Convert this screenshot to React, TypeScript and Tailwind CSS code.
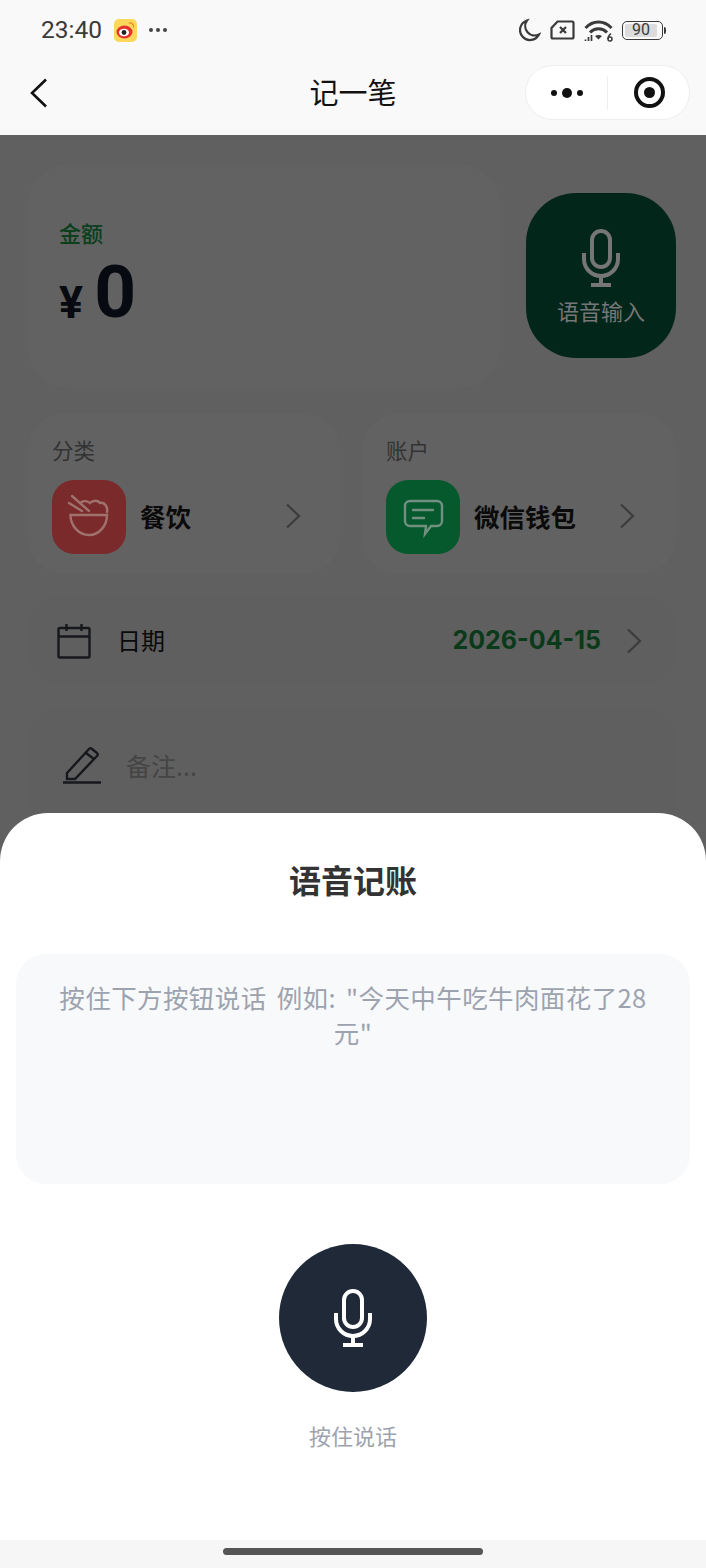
const Chevron = ({ className }: { className?: string }) => (
  <svg className={className} width="16" height="26" viewBox="0 0 16 26" fill="none" stroke="currentColor" strokeWidth="2.2">
    <path d="M2 1.500 14 13 2 24.500" />
  </svg>
);

const MicIcon = ({ className }: { className?: string }) => (
  <svg className={className} width="38" height="58" viewBox="0 0 38 58" fill="none" stroke="currentColor" strokeWidth="4">
    <rect x="10" y="2" width="18" height="36" rx="9" />
    <path d="M2 24v6a17 17 0 0 0 34 0v-6" />
    <path d="M19 47v9M9 56h20" />
  </svg>
);

const StatusBar = () => (
  <div className="flex h-[58px] items-center justify-between pl-[41px] pr-[40px] pt-[2px]">
    <div className="flex items-center">
      <span className="font-['Roboto',sans-serif] text-[24.500px] leading-none text-[#3a3a3a]">23:40</span>
      <svg className="ml-[12px]" width="23" height="23" viewBox="0 0 23 23">
        <rect width="23" height="23" rx="5" fill="#fbd75c" />
        <ellipse cx="10.500" cy="13" rx="8" ry="6.500" fill="#e6322d" />
        <ellipse cx="10" cy="13.500" rx="5" ry="3.800" fill="#fff" />
        <circle cx="10" cy="13.500" r="2.400" fill="#222" />
        <path d="M15 4c3-.5 5 1.500 4.500 4.500" fill="none" stroke="#f08a24" strokeWidth="1.300" />
      </svg>
      <div className="ml-[12px] flex gap-[3px]">
        <span className="h-[4px] w-[4px] rounded-full bg-[#444]" />
        <span className="h-[4px] w-[4px] rounded-full bg-[#444]" />
        <span className="h-[4px] w-[4px] rounded-full bg-[#444]" />
      </div>
    </div>
    <div className="flex items-center text-[#3a3a3a]">
      <svg width="22" height="24" viewBox="0 0 22 24" fill="none" stroke="currentColor" strokeWidth="2.200">
        <path d="M8 2.500a10 10 0 1 0 12 14 9.500 9.500 0 0 1-12-14Z" />
      </svg>
      <svg className="ml-[9px]" width="25" height="20" viewBox="0 0 25 20" fill="none" stroke="currentColor" strokeWidth="2.200">
        <path d="M7.500 1.500H22a1.500 1.500 0 0 1 1.500 1.500v14a1.500 1.500 0 0 1-1.500 1.500H3A1.500 1.500 0 0 1 1.500 17V8Z" />
        <path d="M10 7l6 6M16 7l-6 6" />
      </svg>
      <svg className="ml-[9px]" width="29" height="23" viewBox="0 0 29 23" fill="none" stroke="currentColor" strokeWidth="3">
        <path d="M1.500 9c7.500-8 18.500-8 26 0" />
        <path d="M6 13.500c5-5 12-5 17 0" />
        <path d="M14.500 20.500l-3.500-3.500c2-1.500 5-1.500 7 0Z" fill="currentColor" stroke="none" />
        <path d="M1.500 22v-1.500M4.500 22v-4M7.500 22v-6" strokeWidth="1.700" />
        <circle cx="26" cy="20" r="2" strokeWidth="1.500" />
        <path d="M24 20c0-3 1-4 3-5.500" strokeWidth="1.500" />
      </svg>
      <div className="ml-[9px] flex items-center">
        <div className="flex h-[19px] w-[41px] items-center rounded-[5px] border-[1.500px] border-[#3a3a3a] p-[2px]">
          <div className="flex h-full w-[32px] items-center justify-center rounded-[2px] bg-[#dcdcdc] font-['Roboto',sans-serif] text-[16px] leading-none text-[#3a3a3a]">
            90
          </div>
        </div>
        <span className="ml-[1px] h-[7px] w-[2px] rounded-r-sm bg-[#3a3a3a]" />
      </div>
    </div>
  </div>
);

const NavBar = () => (
  <div className="relative flex h-[77px] items-center justify-between pl-[30px] pr-[16px]">
    <svg width="18" height="30" viewBox="0 0 18 30" fill="none" stroke="#111" strokeWidth="2.600" className="-translate-y-[4px]">
      <path d="M16 1.500 2 15l14 13.500" />
    </svg>
    <span className="absolute left-0 right-0 top-[13px] text-center text-[29px] leading-[40px] text-[#111]">记一笔</span>
    <div className="flex h-[55px] w-[165px] -translate-y-[4px] items-center rounded-full border border-[#eeeeee] bg-white">
      <div className="flex w-[81px] items-center justify-center gap-[5px]">
        <span className="h-[6px] w-[6px] rounded-full bg-[#111]" />
        <span className="h-[10px] w-[10px] rounded-full bg-[#111]" />
        <span className="h-[6px] w-[6px] rounded-full bg-[#111]" />
      </div>
      <div className="h-[34px] w-px bg-[#eeeeee]" />
      <div className="flex flex-1 items-center justify-center pl-[2px]">
        <div className="flex h-[31px] w-[31px] items-center justify-center rounded-full border-[4px] border-[#111]">
          <div className="h-[11px] w-[11px] rounded-full bg-[#111]" />
        </div>
      </div>
    </div>
  </div>
);

const PickerCard = ({
  label,
  name,
  iconBg,
  icon,
  className,
}: {
  label: string;
  name: string;
  iconBg: string;
  icon: React.ReactNode;
  className?: string;
}) => (
  <div className={`flex h-[160px] flex-col rounded-[36px] bg-[#626262] pl-[24px] pt-[23px] ${className}`}>
    <span className="text-[21.500px] leading-[26px] text-[#333]">{label}</span>
    <div className="mt-[17px] flex items-center">
      <div className={`flex h-[74px] w-[74px] items-center justify-center rounded-[22px] ${iconBg}`}>{icon}</div>
      <span className="ml-[14px] -mt-[2px] flex-1 text-[25.500px] font-bold leading-none text-[#0a0a0a]">{name}</span>
      <Chevron className="mr-[39px] -mt-[3px] text-[#3c3c3c]" />
    </div>
  </div>
);

const DimmedPage = () => (
  <div className="flex flex-col gap-[26px] pl-[28px] pr-[30px] pt-[30px]">
    <div className="flex items-center gap-[26px]">
      <div className="h-[223px] w-[472px] rounded-[40px] bg-[#626262] pl-[31px] pt-[52px]">
        <div className="text-[22px] font-medium leading-[30px] text-[#0b3f1d]">金额</div>
        <div className="mt-[7px] flex items-end leading-none text-[#070a10]">
          <span className="mb-[5px] font-['Roboto',sans-serif] text-[45px] font-bold leading-none">¥</span>
          <span className="ml-[11px] font-['Roboto',sans-serif] text-[73px] font-bold leading-[76px]">0</span>
        </div>
      </div>
      <div className="-mt-[2px] flex h-[165px] w-[150px] flex-col items-center rounded-[50px] bg-[#03261a] pt-[36px] text-[#767676]">
        <MicIcon />
        <span className="mt-[8px] text-[22px] leading-[30px]">语音输入</span>
      </div>
    </div>
    <div className="flex gap-[22px]">
      <PickerCard
        className="w-[312px]"
        label="分类"
        name="餐饮"
        iconBg="bg-[#7a2a2a]"
        icon={
          <svg width="74" height="74" viewBox="0 0 74 74" fill="none" stroke="#a0726e" strokeWidth="2.400" strokeLinecap="round">
            <path d="M18.500 35h36.500c0 11-8 20-18 20s-18.500-9-18.500-20Z" />
            <path d="M20 16l17 15M17 23l13 8" />
            <path d="M28 23c3-3 8-2 10 0 3-3 8-3 10 0 4-1 8 3 7 9" />
          </svg>
        }
      />
      <PickerCard
        className="w-[314px] pr-[2px]"
        label="账户"
        name="微信钱包"
        iconBg="bg-[#05592c]"
        icon={
          <svg width="74" height="74" viewBox="0 0 74 74" fill="none" stroke="#729080" strokeWidth="2.400" strokeLinecap="round">
            <path d="M24 21h27a5 5 0 0 1 5 5v15a5 5 0 0 1-5 5H45l-6 8 1-8H24a5 5 0 0 1-5-5V26a5 5 0 0 1 5-5Z" />
            <path d="M27 30h20M27 38h11" />
          </svg>
        }
      />
    </div>
    <div className="-mt-[3px] flex h-[87px] items-center rounded-[32px] bg-[#5f5f5f] pl-[29px] pr-[34px]">
      <svg width="34" height="36" viewBox="0 0 34 36" fill="none" stroke="#16181c" strokeWidth="2.400">
        <rect x="1.500" y="5" width="31" height="29.500" rx="1.500" />
        <path d="M1.500 13.500h31M9.500 1v7M24.500 1v7" />
      </svg>
      <span className="ml-[26px] -mt-[2px] flex-1 text-[24px] leading-none text-[#0a0a0a]">日期</span>
      <span className="font-['Inter',sans-serif] text-[25px] font-bold leading-none text-[#0a3a1a]">2026-04-15</span>
      <Chevron className="ml-[25px] text-[#3c3c3c]" />
    </div>
    <div className="-mt-[3px] flex h-[140px] items-start rounded-t-[32px] bg-[#5f5f5f] pl-[35px] pt-[39px]">
      <svg width="40" height="38" viewBox="0 0 40 38" fill="none" stroke="#16181c" strokeWidth="2.400">
        <path d="M4 27 26 3c1-1 2-1 3 0l5 4c1 1 1 2 0 3L12 33H4Z" />
        <path d="M23 7l8 6" />
        <path d="M0 36.500h38" />
      </svg>
      <span className="ml-[23px] mt-[3px] text-[25px] leading-[32px] text-[#454545]">备注...</span>
    </div>
  </div>
);

const VoiceSheet = () => (
  <div className="absolute bottom-0 left-0 right-0 flex h-[755px] flex-col rounded-t-[48px] bg-white">
    <div className="flex-1">
      <div className="pt-[45px] text-center text-[32px] font-bold leading-[42px] text-[#333]">语音记账</div>
      <div className="mx-[16px] mt-[54px] h-[230px] rounded-[30px] bg-[#f8f9fb] px-[42px] pt-[25px] text-center text-[25.500px] leading-[35px] tracking-[0.4px] text-[#9ca3af] [word-spacing:4px]">
        按住下方按钮说话 例如: "今天中午吃牛肉面花了28元"
      </div>
      <div className="mt-[60px] flex flex-col items-center">
        <div className="flex h-[148px] w-[148px] items-center justify-center rounded-full bg-[#1f2937] text-white">
          <MicIcon />
        </div>
        <span className="mt-[28px] text-[22px] leading-[30px] text-[#9ca3af]">按住说话</span>
      </div>
    </div>
    <div className="flex h-[28px] justify-center bg-[#f6f6f6] pt-[8px]">
      <div className="h-[7px] w-[260px] rounded-full bg-[#555]" />
    </div>
  </div>
);

export default function App() {
  return (
    <div className="relative h-[1568px] overflow-hidden bg-[#606060] font-['Noto_Sans_CJK_SC','Noto_Sans',sans-serif]">
      <div className="h-[135px] bg-[#f9f9f9]">
        <StatusBar />
        <NavBar />
      </div>
      <DimmedPage />
      <VoiceSheet />
    </div>
  );
}
